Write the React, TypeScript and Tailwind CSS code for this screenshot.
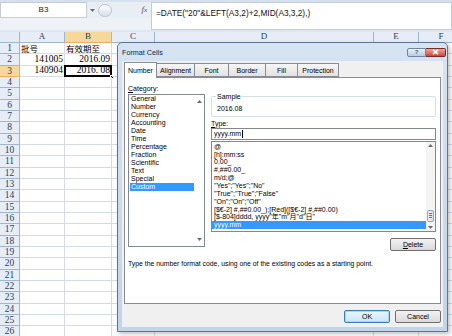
import React from "react";

const COLS = [
  { id: "A", w: "w-[45px]" },
  { id: "B", w: "w-[47px]" },
  { id: "C", w: "w-[43px]" },
  { id: "D", w: "w-[219px]" },
  { id: "E", w: "w-[45px]" },
  { id: "F", w: "w-[45px]" },
];

const ROWS = Array.from({ length: 26 }, (_, i) => i + 1);

const CELLS: Record<string, { text: string; right?: boolean; cjk?: boolean }> = {
  A1: { text: "批号", cjk: true },
  B1: { text: "有效期至", cjk: true },
  A2: { text: "141005", right: true },
  B2: { text: "2016.09", right: true },
  A3: { text: "140904", right: true },
  B3: { text: "2016. 08", right: true },
};

const CATEGORIES = [
  "General",
  "Number",
  "Currency",
  "Accounting",
  "Date",
  "Time",
  "Percentage",
  "Fraction",
  "Scientific",
  "Text",
  "Special",
  "Custom",
];

const FORMATS = [
  "@",
  "[h]:mm:ss",
  "0.00_",
  "#,##0.00_",
  "m/d;@",
  '"Yes";"Yes";"No"',
  '"True";"True";"False"',
  '"On";"On";"Off"',
  "[$€-2] #,##0.00_);[Red]([$€-2] #,##0.00)",
  '[$-804]dddd, yyyy"年"m"月"d"日"',
  "yyyy.mm",
];

function Arrow({ up }: { up?: boolean }) {
  return (
    <svg width="5" height="3" viewBox="0 0 5 3" className="block">
      <path d={up ? "M0 3 L2.5 0 L5 3 Z" : "M0 0 L2.5 3 L5 0 Z"} fill="#6b6b6b" />
    </svg>
  );
}

function FormulaBar() {
  return (
    <div className="flex h-[32px] flex-col bg-[#e9eef5]">
      <div className="h-[2px] bg-[#d5e1ef]" />
      <div className="flex h-[28px]">
        <div className="flex w-[151px] shrink-0 flex-col">
          <div className="flex h-[16px] items-center">
            <div className="flex h-full w-[87px] items-center justify-center border border-[#c5ccd6] bg-white text-[8px] text-[#222]">
              B3
            </div>
            <div className="flex w-[11px] justify-center">
              <Arrow />
            </div>
            <div className="h-[13px] w-[14px] rounded-full border border-[#b9c4d3] bg-gradient-to-b from-[#ffffff] to-[#d7dfea]" />
            <div className="ml-auto mr-[4px] font-['Liberation_Serif',serif] text-[9px] italic text-[#555]">
              f<span className="text-[7px]">x</span>
            </div>
          </div>
          <div className="flex-1 bg-[#eef1f5]" />
        </div>
        <div className="flex-1 border border-[#c5ccd6] bg-white pl-[4px] pt-[5px] text-[8.3px] leading-[10px] text-[#111]">
          =DATE("20"&amp;LEFT(A3,2)+2,MID(A3,3,2),)
        </div>
      </div>
      <div className="h-[2px] bg-[#dfe6ef]" />
    </div>
  );
}

function Sheet() {
  return (
    <div className="flex flex-col">
      <div className="flex h-[11px]">
        <div className="w-[20px] shrink-0 border-b border-r border-[#9eb6ce] bg-[#e4ebf4]" />
        {COLS.map((c) => (
          <div
            key={c.id}
            className={`${c.w} flex shrink-0 items-center justify-center border-b border-r font-['Liberation_Serif',serif] text-[9px] text-[#2a3f5a] ${
              c.id === "B" ? "border-[#e5b35a] bg-[#f7d89c]" : "border-[#9eb6ce] bg-[#e6edf6]"
            }`}
          >
            {c.id}
          </div>
        ))}
      </div>
      {ROWS.map((r) => (
        <div key={r} className={`flex ${r % 3 === 2 ? "h-[12px]" : "h-[11px]"}`}>
          <div
            className={`flex w-[20px] shrink-0 items-center justify-center border-b border-r font-['Liberation_Serif',serif] text-[9.5px] text-[#2a3f5a] ${
              r === 3 ? "border-[#e5b35a] bg-[#f7d89c]" : "border-[#9eb6ce] bg-[#e6edf6]"
            }`}
          >
            {r}
          </div>
          {COLS.map((c) => {
            const cell = CELLS[`${c.id}${r}`];
            const selected = c.id === "B" && r === 3;
            return (
              <div
                key={c.id}
                className={`${c.w} relative flex shrink-0 items-center overflow-visible border-b border-r border-[#d6dce5] px-[1px] ${
                  cell?.right ? "justify-end" : "justify-start"
                } ${cell?.cjk ? "font-['Noto_Sans_CJK_SC',sans-serif] text-[8.5px]" : "font-['Liberation_Serif',serif] text-[9.5px]"} leading-none text-black`}
              >
                {cell?.text}
                {selected && (
                  <>
                    <div className="absolute -left-[1px] -top-[1px] bottom-[-1px] right-[-1px] border-2 border-black" />
                    <div className="absolute bottom-[-3px] right-[-3px] h-[4px] w-[4px] border border-white bg-black" />
                  </>
                )}
              </div>
            );
          })}
        </div>
      ))}
    </div>
  );
}

function Scrollbar({ thumb }: { thumb?: boolean }) {
  return (
    <div className="flex w-[9px] shrink-0 flex-col bg-[#f4f4f4]">
      <div className="flex h-[8px] items-center justify-center">
        <Arrow up />
      </div>
      {thumb && (
        <div className="mx-[1px] mt-[60px] flex h-[12px] flex-col items-center justify-center gap-[1px] rounded-[2px] border border-[#9aa5b3] bg-gradient-to-r from-[#f2f2f2] to-[#d9dde3]">
          <div className="h-[1px] w-[3px] bg-[#6a7380]" />
          <div className="h-[1px] w-[3px] bg-[#6a7380]" />
          <div className="h-[1px] w-[3px] bg-[#6a7380]" />
        </div>
      )}
      <div className="mt-auto flex h-[8px] items-center justify-center">
        <Arrow />
      </div>
    </div>
  );
}

function Button({ children, focused, className }: { children: React.ReactNode; focused?: boolean; className?: string }) {
  return (
    <div
      className={`flex h-[13px] w-[46px] items-center justify-center rounded-[2px] border text-[7px] text-black ${
        focused
          ? "border-[#3c7fb1] bg-gradient-to-b from-[#eaf6fd] to-[#c9e5f6] shadow-[inset_0_0_0_1px_#a6d6f2]"
          : "border-[#707070] bg-gradient-to-b from-[#f2f2f2] to-[#d9d9d9]"
      } ${className ?? ""}`}
    >
      {children}
    </div>
  );
}

function FormatCellsDialog() {
  const tabs = [
    { label: "Number", w: "w-[33px]" },
    { label: "Alignment", w: "w-[38px]" },
    { label: "Font", w: "w-[34px]" },
    { label: "Border", w: "w-[37px]" },
    { label: "Fill", w: "w-[32px]" },
    { label: "Protection", w: "w-[41px]" },
  ];

  return (
    <div className="absolute left-[117px] top-[42px] flex h-[290px] w-[331px] flex-col rounded-t-[5px] border border-[#5f7591] bg-gradient-to-b from-[#d6e3f2] to-[#c2d4ea] text-[7px] leading-[9px] text-black shadow-[2px_2px_4px_rgba(0,0,0,0.25)]">
      {/* title bar */}
      <div className="flex h-[18px] shrink-0 items-center pl-[4px] pr-[1px]">
        <span className="text-[7.2px] text-[#10243f]">Format Cells</span>
        <div className="ml-auto flex items-center">
          <div className="flex h-[9px] w-[19px] items-center justify-center rounded-l-[2px] border border-[#6f84a0] bg-gradient-to-b from-[#e9f0f8] to-[#b9cbe2] text-[6px] font-bold leading-none text-[#4c5b70]">
            ?
          </div>
          <div className="flex h-[9px] w-[20px] items-center justify-center rounded-r-[2px] border border-l-0 border-[#7a2a22] bg-gradient-to-b from-[#e9a99d] to-[#c8453a]">
            <svg width="7" height="6" viewBox="0 0 7 6">
              <path d="M1 0.8 L6 5.2 M6 0.8 L1 5.2" stroke="#fff" strokeWidth="1.6" />
            </svg>
          </div>
        </div>
      </div>

      {/* body */}
      <div className="mx-[4px] flex h-[266px] flex-col bg-[#f0f0f0] px-[2px] pt-[2px]">
        {/* tabs */}
        <div className="relative z-10 flex h-[14px] items-end">
          {tabs.map((t, i) =>
            i === 0 ? (
              <div
                key={t.label}
                className={`${t.w} -mb-[1px] flex h-[16px] items-center justify-center border border-b-0 border-[#898c95] bg-white`}
              >
                {t.label}
              </div>
            ) : (
              <div
                key={t.label}
                className={`${t.w} flex h-[14px] items-center justify-center border border-l-0 border-[#898c95] bg-gradient-to-b from-[#f6f6f6] to-[#e2e2e2]`}
              >
                {t.label}
              </div>
            )
          )}
        </div>

        {/* panel */}
        <div className="flex h-[227px] flex-col border border-[#898c95] bg-white">
          <div className="flex h-[173px]">
            <div className="ml-[3px] flex w-[77px] flex-col">
              <div className="mt-[6px] h-[9px]">
                <span className="underline">C</span>ategory:
              </div>
              <div className="mt-[1px] flex h-[153px] border border-[#828790]">
                <div className="flex flex-1 flex-col pl-[1px] pr-[1px]">
                  {CATEGORIES.map((c) => (
                    <div
                      key={c}
                      className={`h-[8px] pl-[1px] leading-[8px] ${c === "Custom" ? "bg-[#3399ff] text-white" : ""}`}
                    >
                      {c}
                    </div>
                  ))}
                </div>
                <div className="flex w-[9px] flex-col items-center justify-between py-[5px]">
                  <Arrow up />
                  <Arrow />
                </div>
              </div>
            </div>

            <div className="ml-[6px] flex w-[225px] flex-col">
              <fieldset className="mt-[14px] h-[25px] rounded-[2px] border border-[#d5dfe5] px-[3px]">
                <legend className="ml-[1px] px-[1px] leading-[9px]">Sample</legend>
                <div className="mt-[3px] pl-[2px]">2016.08</div>
              </fieldset>
              <div className="mt-[2px] h-[9px]">
                <span className="underline">T</span>ype:
              </div>
              <div className="flex h-[12px] items-center border border-[#828790] pl-[2px]">
                yyyy.mm<span className="ml-[0.5px] inline-block h-[8px] w-[1px] bg-black" />
              </div>
              <div className="mt-[1px] flex h-[92px] border border-[#828790]">
                <div className="flex flex-1 flex-col overflow-hidden pt-[1px]">
                  {FORMATS.map((f) => (
                    <div
                      key={f}
                      className={`h-[7.85px] whitespace-nowrap pl-[2px] font-['Liberation_Sans','Noto_Sans_CJK_SC',sans-serif] leading-[7.85px] ${
                        f === "yyyy.mm" ? "bg-[#3399ff] text-white" : ""
                      }`}
                    >
                      {f}
                    </div>
                  ))}
                </div>
                <Scrollbar thumb />
              </div>
              <Button className="mt-[6px] self-end">
                <span className="underline">D</span>elete
              </Button>
            </div>
          </div>
          <div className="ml-[3px] mt-[8px] text-[6.85px]">
            Type the number format code, using one of the existing codes as a starting point.
          </div>
        </div>

        {/* buttons */}
        <div className="mt-[6px] flex justify-end gap-[5px]">
          <Button focused>OK</Button>
          <Button>Cancel</Button>
        </div>
      </div>
    </div>
  );
}

export default function App() {
  return (
    <div className="relative h-[336px] w-[452px] overflow-hidden bg-white font-['Liberation_Sans',sans-serif]">
      <FormulaBar />
      <Sheet />
      <FormatCellsDialog />
    </div>
  );
}
